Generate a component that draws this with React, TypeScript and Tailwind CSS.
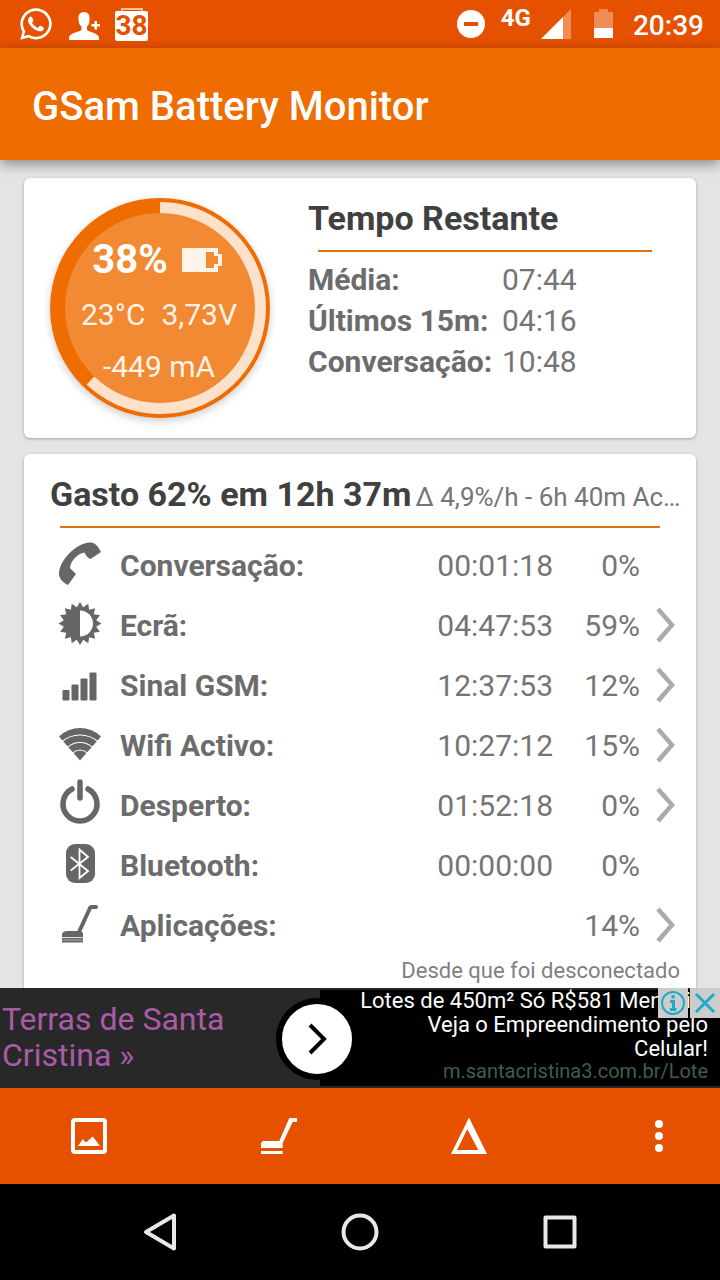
import React from 'react'
import { FaWhatsapp } from 'react-icons/fa'

const remaining = [
  { label: 'Média:', value: '07:44' },
  { label: 'Últimos 15m:', value: '04:16' },
  { label: 'Conversação:', value: '10:48' },
]

const usage = [
  { icon: <PhoneIcon />, label: 'Conversação:', time: '00:01:18', percent: '0%', more: false },
  { icon: <BrightnessIcon />, label: 'Ecrã:', time: '04:47:53', percent: '59%', more: true },
  { icon: <SignalIcon />, label: 'Sinal GSM:', time: '12:37:53', percent: '12%', more: true },
  { icon: <WifiIcon />, label: 'Wifi Activo:', time: '10:27:12', percent: '15%', more: true },
  { icon: <PowerIcon />, label: 'Desperto:', time: '01:52:18', percent: '0%', more: true },
  { icon: <BluetoothIcon />, label: 'Bluetooth:', time: '00:00:00', percent: '0%', more: false },
  { icon: <SweeperIcon />, label: 'Aplicações:', time: '', percent: '14%', more: true },
]

function PhoneIcon() {
  return (
    <svg viewBox="0 0 48 48" className="w-12 h-12 overflow-visible" fill="currentColor">
      <path d="M3 33C3 20 19 3 33 1.5C37 1 40 3 42 6L45 11L34.5 18C31.5 17 29.5 14 28.5 11.5C21 13 14.5 20 14 27L20 33L12 44C8 42 3 38 3 33Z" />
    </svg>
  )
}

function BrightnessIcon() {
  const points = Array.from({ length: 32 }, (_, i) => {
    const r = i % 2 === 0 ? 21.5 : 16.5
    const a = (i * Math.PI) / 16
    return `${24 + r * Math.sin(a)},${22.5 - r * Math.cos(a)}`
  }).join(' ')
  return (
    <svg viewBox="0 0 48 48" className="w-12 h-12" fill="currentColor">
      <polygon points={points} />
      <path d="M24 9.5A13 13 0 0 1 24 35.5Z" fill="#fff" />
    </svg>
  )
}

function SignalIcon() {
  return (
    <svg viewBox="0 0 48 48" className="w-12 h-12" fill="currentColor">
      <rect x="6.5" y="29" width="7" height="10.5" rx="1" />
      <rect x="15.5" y="23.5" width="7" height="16" rx="1" />
      <rect x="24.5" y="17.5" width="7" height="22" rx="1" />
      <rect x="33.5" y="11.5" width="7" height="28" rx="1" />
    </svg>
  )
}

function WifiIcon() {
  return (
    <svg viewBox="0 0 48 48" className="w-12 h-12" fill="currentColor">
      <path d="M24 39.5L3 15.5Q12 7 24 7T45 15.5Z" />
      <g fill="none" stroke="#fff" strokeWidth="1.2">
        <path d="M6 20.5Q14 14 24 14T42 20.5" />
        <path d="M11 26.5Q17 21.5 24 21.5T37 26.5" />
        <path d="M16 32.5Q20 29 24 29T32 32.5" />
      </g>
    </svg>
  )
}

function PowerIcon() {
  return (
    <svg viewBox="0 0 48 48" className="w-12 h-12 overflow-visible" fill="none" stroke="currentColor" strokeWidth="5.5" strokeLinecap="round">
      <path d="M24 1V17" />
      <path d="M16 8A17 17 0 1 0 32 8" />
    </svg>
  )
}

function BluetoothIcon() {
  return (
    <svg viewBox="0 0 48 48" className="w-12 h-12">
      <rect x="10" y="3" width="29" height="39" rx="9" fill="currentColor" />
      <path d="M14.7 16L32 30L23.5 37V8.5L32 16L14.7 29.5" fill="none" stroke="#fff" strokeWidth="1.8" />
    </svg>
  )
}

function SweeperIcon() {
  return (
    <svg viewBox="0 0 48 48" className="w-12 h-12">
      <path d="M6 41.5V33Q7 30 11 30H23Q27 30 27 33V41.5Z" fill="currentColor" />
      <path d="M6 36.5H27" stroke="#ddd" strokeWidth="1" />
      <path d="M6 39H27" stroke="#aaa" strokeWidth="1" />
      <path d="M23 31L34 7Q34.5 6 36 6H40" fill="none" stroke="currentColor" strokeWidth="4" strokeLinecap="round" />
    </svg>
  )
}

function StatusBar() {
  return (
    <div className="h-12 shrink-0 bg-[#e65100] text-white flex items-center justify-between pl-[18px] pr-4">
      <div className="flex items-center">
        <FaWhatsapp className="w-9 h-9" />
        <svg viewBox="0 0 32 28" className="w-8 h-7 ml-[15px] mt-1" fill="currentColor">
          <path d="M15 0C11 0 9 3 9.5 7C9.5 11 10.5 13 12.5 14.5V18C10 20 0 21 0 26V28H30V26C30 21 20 20 18 18V14.5C20 13 20.5 11 20.5 7C21 3 19 0 15 0Z" />
          <path d="M25.5 9H28V12H31V14.5H28V17.5H25.5V14.5H22.5V12H25.5Z" />
        </svg>
        <div className="ml-[14px] flex flex-col items-center">
          <span className="w-[22px] h-[3px] border-2 border-b-0 border-[#f9bd94]" />
          <span className="w-[33px] h-[30px] rounded-xs bg-white text-[#e65100] text-[28px] leading-[30px] font-bold text-center">38</span>
        </div>
      </div>
      <div className="flex items-center">
        <svg viewBox="0 0 28 28" className="w-7 h-7">
          <circle cx="14" cy="14" r="14" fill="#fff" />
          <rect x="7" y="12" width="14" height="4" fill="#e65100" />
        </svg>
        <span className="ml-4 mb-3 text-[24px] leading-6 font-bold">4G</span>
        <svg viewBox="0 0 30 30" className="w-[30px] h-[30px] ml-[10px]">
          <path d="M30 0V30H0Z" fill="#f08d57" />
          <path d="M22 8V30H0Z" fill="#fff" />
        </svg>
        <svg viewBox="0 0 20 30" className="w-5 h-[30px] ml-[23px]">
          <path d="M5 0H14V3H19V19H0V3H5Z" fill="#f08d57" />
          <path d="M0 19H19V29H0Z" fill="#fff" />
        </svg>
        <span className="ml-[19px] mt-1 text-[28px] leading-8 font-medium">20:39</span>
      </div>
    </div>
  )
}

function BatteryDial() {
  return (
    <div className="grid w-[220px] h-[220px] shrink-0 rounded-full shadow-[0_3px_8px_rgba(0,0,0,0.2)]">
      <svg viewBox="0 0 220 220" className="[grid-area:1/1] w-full h-full">
        <circle cx="110" cy="110" r="110" fill="#ef6c00" />
        <path d="M110 110V4A106 106 0 1 1 36.6 186.5Z" fill="#fce1cb" />
        <circle cx="110" cy="110" r="95" fill="#f28a33" />
      </svg>
      <div className="[grid-area:1/1] flex flex-col items-center pt-[37px] text-white text-[30px]">
        <div className="flex items-center gap-[14px] h-[50px] pr-[6px]">
          <span className="text-[40px] font-bold">38%</span>
          <svg viewBox="0 0 40 24" className="w-10 h-6" fill="#fff3ea" fillRule="evenodd">
            <path d="M0 1Q0 0 1 0H36V6H40V18H36V24H1Q0 24 0 23ZM24 4V20H32V16H36V8H32V4Z" />
          </svg>
        </div>
        <div className="flex gap-4 leading-[60px] h-14 pr-[2px] text-[#fff3ea]">
          <span>23°C</span>
          <span>3,73V</span>
        </div>
        <span className="leading-[52px] pr-[2px] text-[#fff3ea]">-449 mA</span>
      </div>
    </div>
  )
}

function RemainingCard() {
  return (
    <section className="bg-white rounded-md shadow-[0_1px_3px_rgba(0,0,0,0.3)] flex gap-[38px] pt-5 pb-5 pl-[26px] pr-[34px]">
      <BatteryDial />
      <div className="flex-1">
        <h2 className="text-[34px] leading-10 font-bold text-[#404040]">Tempo Restante</h2>
        <div className="mt-3 ml-[10px] mr-[10px] h-[2px] bg-[#dd720f]" />
        <table className="mt-[7px] text-[30px] leading-[41px]">
          <tbody>
            {remaining.map((item) => (
              <tr key={item.label}>
                <th scope="row" className="w-[194px] p-0 text-left font-bold text-[#6c6c6c] whitespace-nowrap">{item.label}</th>
                <td className="p-0 text-[#757575]">{item.value}</td>
              </tr>
            ))}
          </tbody>
        </table>
      </div>
    </section>
  )
}

function UsageCard() {
  return (
    <section className="bg-white rounded-md shadow-[0_1px_3px_rgba(0,0,0,0.3)] pt-5 pb-4">
      <div className="flex items-baseline gap-1 h-10 pl-[26px] leading-10 whitespace-nowrap">
        <h2 className="text-[34px] font-bold text-[#404040]">Gasto 62% em 12h 37m</h2>
        <p className="text-[26px] text-[#757575]">Δ 4,9%/h - 6h 40m Ac…</p>
      </div>
      <div className="mt-3 mx-9 h-[2px] bg-[#dd720f]" />
      <table className="mt-[7px] w-full text-[30px] text-[#757575]">
        <tbody>
          {usage.map((row) => (
            <tr key={row.label} className="h-[60px]">
              <td className="w-24 p-0 pl-8 text-[#666]">{row.icon}</td>
              <th scope="row" className="p-0 text-left font-bold text-[#6c6c6c]">{row.label}</th>
              <td className="p-0 text-right">{row.time}</td>
              <td className="w-[87px] p-0 text-right">{row.percent}</td>
              <td className="w-14 p-0 pl-[15px]">
                {row.more && (
                  <button type="button" aria-label={row.label} className="block">
                    <svg viewBox="0 0 20 36" className="w-5 h-9" fill="none" stroke="#aaa" strokeWidth="4.5">
                      <path d="M3 2L17 18L3 34" />
                    </svg>
                  </button>
                )}
              </td>
            </tr>
          ))}
        </tbody>
      </table>
      <p className="pr-4 text-right text-[22px] leading-8 text-[#808080]">Desde que foi desconectado</p>
    </section>
  )
}

function AdBanner() {
  return (
    <aside className="relative h-[100px] shrink-0 bg-[#282828] flex items-center">
      <a href="#" className="w-[320px] shrink-0 pl-[2px] pr-12 pb-[2px] text-[32px] leading-9 text-[#a85ca8]">
        Terras de Santa Cristina »
      </a>
      <div className="flex-1 h-24 bg-black pr-3 text-right text-[22px] leading-6 text-white">
        <p className="-mt-px whitespace-nowrap">Lotes de 450m² Só R$581 Mensais!</p>
        <p>Veja o Empreendimento pelo</p>
        <p>Celular!</p>
        <a href="#" className="block text-[20px] leading-5 text-[#3f5f45]">m.santacristina3.com.br/Lote</a>
      </div>
      <button type="button" aria-label="Abrir" className="absolute left-[276px] top-[10px] w-[82px] h-[82px] rounded-full border-6 border-black bg-white flex items-center justify-center">
        <svg viewBox="0 0 20 32" className="w-5 h-8" fill="none" stroke="#000" strokeWidth="4">
          <path d="M3 2L17 16L3 30" />
        </svg>
      </button>
      <div className="absolute right-0 top-0 flex gap-[2px]">
        <button type="button" aria-label="Info" className="w-[30px] h-[30px] bg-[#ccc]">
          <svg viewBox="0 0 30 30" fill="none" stroke="#1fabc7">
            <circle cx="15" cy="15" r="11" strokeWidth="2" />
            <path d="M15 7V10.5M12 13.5H15.5V22M12 21.5H18.500" strokeWidth="3" />
          </svg>
        </button>
        <button type="button" aria-label="Fechar" className="w-[30px] h-[30px] bg-[#ccc]">
          <svg viewBox="0 0 30 30" fill="none" stroke="#1fabc7" strokeWidth="3">
            <path d="M6 6L24 24M24 6L6 24" />
          </svg>
        </button>
      </div>
    </aside>
  )
}

function Toolbar() {
  return (
    <nav className="h-24 shrink-0 bg-[#e65100] text-white flex justify-between items-center pl-[41px] pr-[13px]">
      <button type="button" aria-label="Gráfico" className="w-24 flex justify-center">
        <svg viewBox="0 0 48 48" className="w-12 h-12" fill="currentColor">
          <rect x="8" y="8" width="32" height="32" rx="2" fill="none" stroke="currentColor" strokeWidth="4" />
          <path d="M13 34L17.7 27.3L21 30.5L27.7 24.5L35 34Z" />
        </svg>
      </button>
      <button type="button" aria-label="Aplicações" className="w-24 flex justify-center">
        <svg viewBox="0 0 48 48" className="w-12 h-12" fill="currentColor">
          <path d="M6 36V31L8 29H24.3L34.3 6H42V10H37.7L27.7 31V36Z" />
          <path d="M6 39H27.7V42H6Z" />
        </svg>
      </button>
      <button type="button" aria-label="Delta" className="w-24 flex justify-center">
        <svg viewBox="0 0 48 48" className="w-12 h-12" fill="currentColor" fillRule="evenodd">
          <path d="M24 5.5L42 42H6ZM22.3 17.3L12 38H33.3Z" />
        </svg>
      </button>
      <button type="button" aria-label="Mais opções" className="w-24 flex justify-center">
        <svg viewBox="0 0 48 48" className="w-12 h-12" fill="currentColor">
          <circle cx="24" cy="12" r="4" />
          <circle cx="24" cy="24" r="4" />
          <circle cx="24" cy="36" r="4" />
        </svg>
      </button>
    </nav>
  )
}

function NavigationBar() {
  return (
    <nav className="h-24 shrink-0 bg-black text-[#e8e8e8] grid grid-cols-3 items-center px-[60px]">
      <button type="button" aria-label="Voltar" className="flex justify-center">
        <svg viewBox="0 0 48 48" className="w-12 h-12" fill="none" stroke="currentColor" strokeWidth="4" strokeLinejoin="round">
          <path d="M10 24L38 7.5V40.5Z" />
        </svg>
      </button>
      <button type="button" aria-label="Início" className="flex justify-center">
        <svg viewBox="0 0 48 48" className="w-12 h-12" fill="none" stroke="currentColor" strokeWidth="4">
          <circle cx="24" cy="24" r="16.5" />
        </svg>
      </button>
      <button type="button" aria-label="Recentes" className="flex justify-center">
        <svg viewBox="0 0 48 48" className="w-12 h-12" fill="none" stroke="currentColor" strokeWidth="4" strokeLinejoin="round">
          <rect x="9.5" y="9.5" width="29" height="29" />
        </svg>
      </button>
    </nav>
  )
}

function App() {
  return (
    <div className="h-screen flex flex-col bg-[#e4e4e4] font-[Roboto,sans-serif]">
      <StatusBar />
      <header className="relative h-28 shrink-0 bg-[#ef6c00] shadow-[0_4px_12px_rgba(0,0,0,0.4)] flex items-center px-8">
        <h1 className="text-[40px] font-medium text-white pt-[6px]">GSam Battery Monitor</h1>
      </header>
      <main className="flex-1 min-h-0 overflow-y-auto [scrollbar-width:none] px-6 pt-[18px] flex flex-col gap-4 *:shrink-0">
        <RemainingCard />
        <UsageCard />
      </main>
      <AdBanner />
      <Toolbar />
      <NavigationBar />
    </div>
  )
}

export default App
